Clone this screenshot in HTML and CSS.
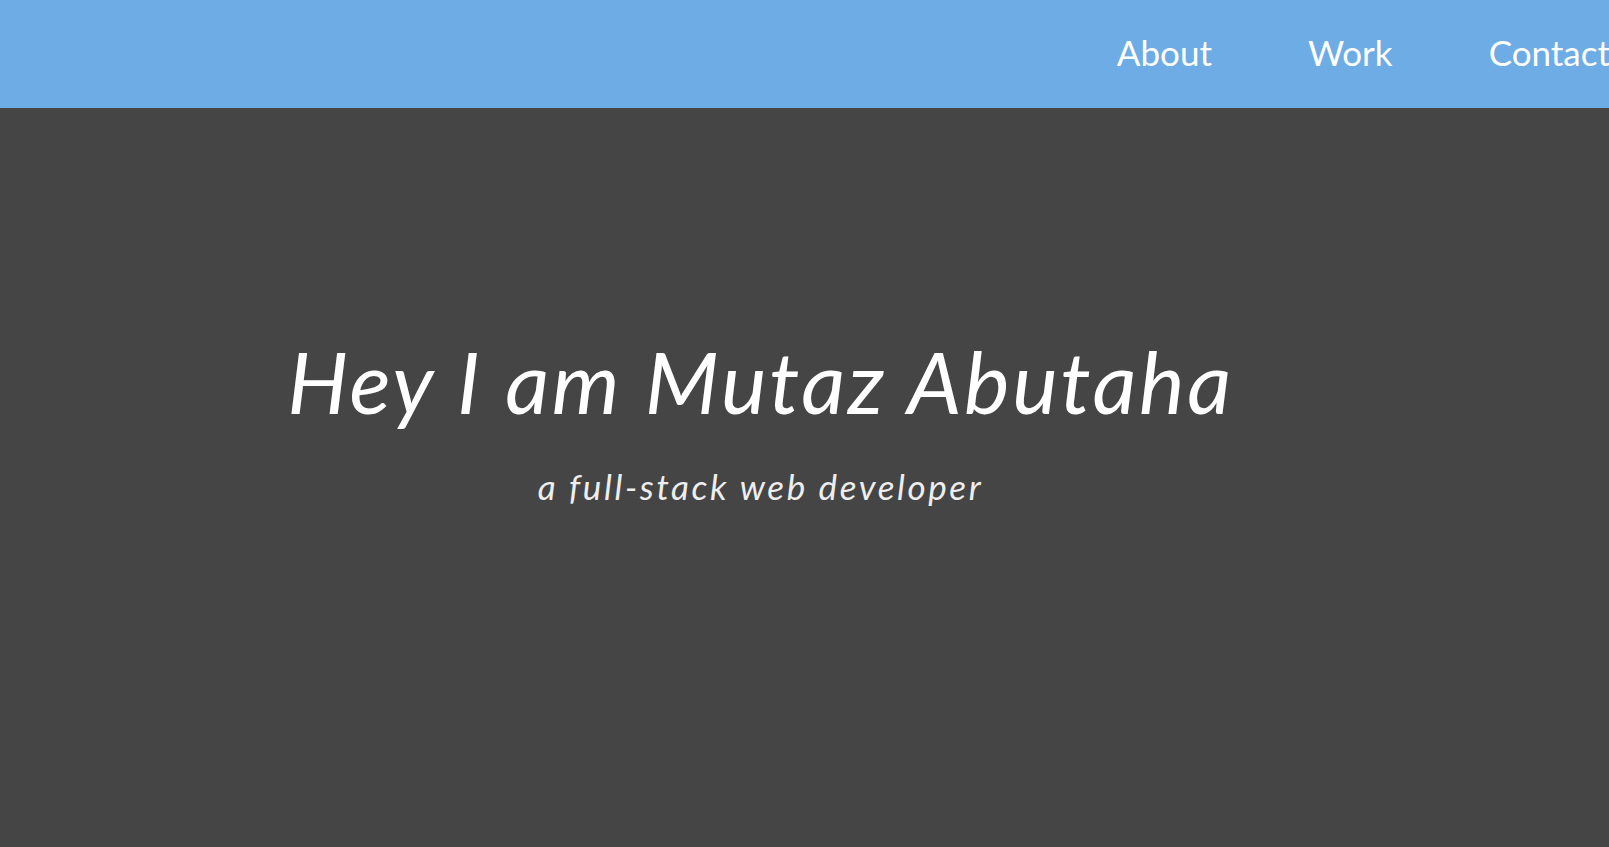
FILE: index.html
```html
<!DOCTYPE html>
<html lang="en">
<head>
<meta charset="utf-8">
<title>Mutaz Abutaha</title>
<link rel="stylesheet" href="styles.css">
</head>
<body>
<header class="topbar">
  <ul class="menu">
    <li class="menu-item"><a href="#about">About</a></li>
    <li class="menu-item"><a href="#work">Work</a></li>
    <li class="menu-item"><a href="#contact">Contact</a></li>
  </ul>
</header>
<main class="hero">
  <h1 class="hero-title">Hey I am Mutaz Abutaha</h1>
  <p class="hero-sub">a full-stack web developer</p>
</main>
</body>
</html>
```
FILE: styles.css
```css
html, body {
  margin: 0;
  padding: 0;
  height: 100%;
}
body {
  background: #454545;
  font-family: Lato, "Open Sans", sans-serif;
  overflow: hidden;
}
.topbar {
  display: flex;
  height: 108px;
  background: #6eace5;
}
.menu {
  display: flex;
  gap: 96px;
  list-style: none;
  margin: 0 -1px 0 auto;
  padding: 0 0 4px 0;
}
.menu-item a {
  display: block;
  font-size: 35px;
  line-height: 104px;
  color: #ffffff;
  text-decoration: none;
}
.hero {
  display: flex;
  flex-direction: column;
  align-items: center;
  padding: 221px 88px 0 0;
}
.hero-title {
  margin: 0;
  font-size: 86px;
  line-height: 1.2;
  font-style: italic;
  font-weight: 400;
  letter-spacing: 2.6px;
  color: #ffffff;
}
.hero-sub {
  margin: 33px 0 0 0;
  font-size: 35px;
  line-height: 1.2;
  font-style: italic;
  letter-spacing: 2.6px;
  color: #eeeeee;
}
```
